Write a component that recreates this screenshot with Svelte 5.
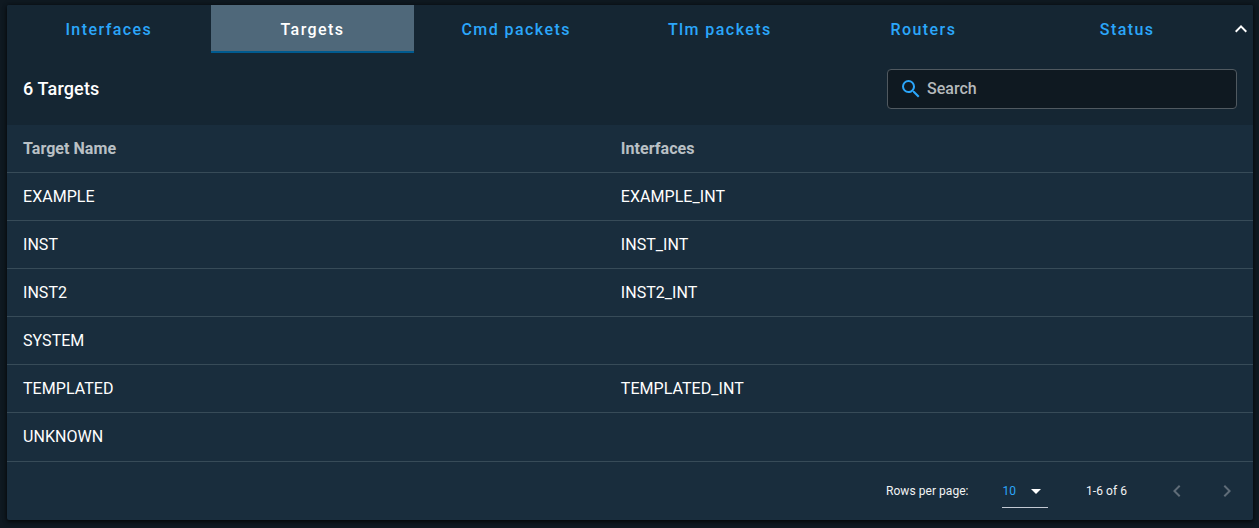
<script>
  const tabs = ['Interfaces', 'Targets', 'Cmd packets', 'Tlm packets', 'Routers', 'Status'];
  let active = $state('Targets');
  let query = $state('');
  const targets = [
    { name: 'EXAMPLE', iface: 'EXAMPLE_INT' },
    { name: 'INST', iface: 'INST_INT' },
    { name: 'INST2', iface: 'INST2_INT' },
    { name: 'SYSTEM', iface: '' },
    { name: 'TEMPLATED', iface: 'TEMPLATED_INT' },
    { name: 'UNKNOWN', iface: '' },
  ];
  const rows = $derived(targets.filter((t) => (t.name + t.iface).toLowerCase().includes(query.toLowerCase())));
</script>

<main class="card">
  <nav class="tabs">
    {#each tabs as tab}
      <button class="tab" class:active={tab === active} onclick={() => (active = tab)}>{tab}</button>
    {/each}
    <span class="collapse">
      <svg width="24" height="24" viewBox="0 0 24 24"><path fill="#fff" d="M7.41,15.41L12,10.83L16.59,15.41L18,14L12,8L6,14L7.41,15.41Z" /></svg>
    </span>
  </nav>
  <header class="bar">
    <h1>6 Targets</h1>
    <label class="search">
      <svg width="24" height="24" viewBox="0 0 24 24"><path fill="#2ba6fa" d="M9.5,3A6.5,6.5 0 0,1 16,9.5C16,11.11 15.41,12.59 14.44,13.73L14.71,14H15.5L20.5,19L19,20.5L14,15.5V14.71L13.73,14.44C12.59,15.41 11.11,16 9.5,16A6.5,6.5 0 0,1 3,9.5A6.5,6.5 0 0,1 9.5,3M9.5,5C7,5 5,7 5,9.5C5,12 7,14 9.5,14C12,14 14,12 14,9.5C14,7 12,5 9.5,5Z" /></svg>
      <input placeholder="Search" bind:value={query} />
    </label>
  </header>
  <section class="table">
    <div class="row head"><span>Target Name</span><span>Interfaces</span></div>
    {#each rows as row}
      <div class="row"><span>{row.name}</span><span>{row.iface}</span></div>
    {/each}
  </section>
  <footer>
    <span class="label">Rows per page:</span>
    <span class="select">
      <span>10</span>
      <svg width="24" height="24" viewBox="0 0 24 24"><path fill="#fff" d="M7,10L12,15L17,10H7Z" /></svg>
    </span>
    <span class="range">1-6 of 6</span>
    <span class="page"><svg width="24" height="24" viewBox="0 0 24 24"><path d="M15.41,16.58L10.83,12L15.41,7.41L14,6L8,12L14,18L15.41,16.58Z" /></svg></span>
    <span class="page"><svg width="24" height="24" viewBox="0 0 24 24"><path d="M8.59,16.58L13.17,12L8.59,7.41L10,6L16,12L10,18L8.59,16.58Z" /></svg></span>
  </footer>
</main>

<style>
  :global(body) {
    background: #0f1921;
    font-family: Roboto, sans-serif;
    overflow: hidden;
  }
  .card {
    box-sizing: border-box;
    width: 1246px;
    height: 515px;
    margin: 5px 6px 8px 7px;
    display: flex;
    flex-direction: column;
    background: #192d3d;
    color: #fff;
    border-radius: 2px;
    box-shadow: 0 2px 4px rgba(0, 0, 0, 0.6), 0 0 5px rgba(0, 0, 0, 0.4);
  }
  svg { display: block; flex: none; }
  .tabs {
    display: flex;
    height: 48px;
    background: #152633;
    border-radius: 2px 2px 0 0;
  }
  .tab {
    width: 203.66px;
    height: 48px;
    padding: 1px 0 0;
    border: 0;
    background: none;
    color: #2ba6fa;
    font: 500 16px/47px Roboto, sans-serif;
    letter-spacing: 1.43px;
  }
  .tab.active {
    background: #4f687a;
    color: #fff;
    box-shadow: inset 0 -2px #005a8f;
  }
  .collapse {
    display: flex;
    align-items: center;
  }
  .bar {
    box-sizing: border-box;
    height: 72px;
    padding: 0 16px;
    display: flex;
    align-items: center;
    justify-content: space-between;
    background: #152633;
  }
  h1 {
    margin: 0 0 2px;
    font-size: 18px;
    font-weight: 500;
    letter-spacing: 0.15px;
  }
  .search {
    box-sizing: border-box;
    width: 350px;
    height: 40px;
    padding-left: 11px;
    display: flex;
    align-items: center;
    gap: 4px;
    border: 1px solid #505960;
    border-radius: 4px;
    background: #0f1921;
  }
  input {
    width: 290px;
    padding: 0;
    border: 0;
    outline: 0;
    background: none;
    color: #fff;
    font: 500 16px/24px Roboto, sans-serif;
  }
  input::placeholder { color: #b5b9bc; }
  .row {
    box-sizing: border-box;
    height: 48px;
    display: grid;
    grid-template-columns: 598px 1fr;
    align-items: center;
    border-bottom: 1px solid #374b58;
    font-size: 16px;
    letter-spacing: 0.05px;
  }
  .row:last-child { height: 49px; padding-bottom: 1px; }
  .row span { padding-left: 16px; }
  .row span + span { padding-left: 15.8px; }
  .head {
    color: #b9c0c5;
    font-weight: 700;
  }
  footer {
    display: flex;
    align-items: center;
    justify-content: flex-end;
    height: 58px;
    padding-right: 14px;
    font-size: 12px;
    letter-spacing: 0.05px;
    color: #f1f3f4;
  }
  .label { margin-right: 33.5px; }
  .select {
    box-sizing: border-box;
    display: flex;
    align-items: center;
    justify-content: space-between;
    width: 46px;
    height: 33px;
    padding-left: 0.5px;
    border-bottom: 1px solid #c3c9d3;
    color: #2ba6fa;
  }
  .range { margin: 0 38px; }
  .page + .page { margin-left: 26px; }
  .page path { fill: #5f6c78; }
</style>
